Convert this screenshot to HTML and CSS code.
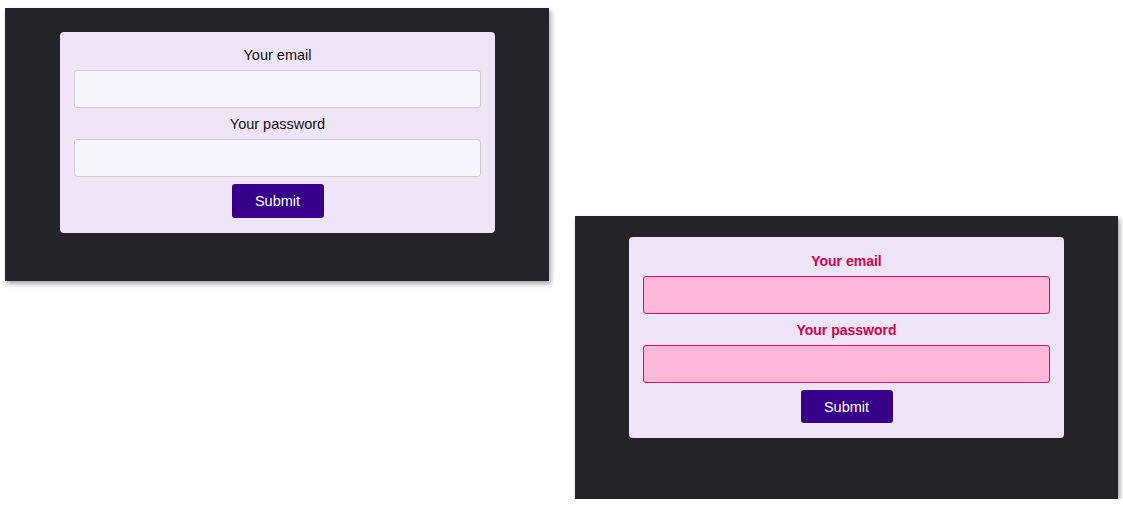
FILE: index.html
```html
<!DOCTYPE html>
<html lang="en">
<head>
<meta charset="utf-8">
<title>Forms</title>
<link rel="stylesheet" href="styles.css">
</head>
<body>
<div class="stage">
  <div class="panel panel-a">
    <form class="card">
      <label class="label">Your email</label>
      <div class="field"></div>
      <label class="label">Your password</label>
      <div class="field"></div>
      <button type="button" class="btn">Submit</button>
    </form>
  </div>
  <div class="panel panel-b">
    <form class="card error">
      <label class="label">Your email</label>
      <div class="field"></div>
      <label class="label">Your password</label>
      <div class="field"></div>
      <button type="button" class="btn">Submit</button>
    </form>
  </div>
</div>
</body>
</html>
```
FILE: styles.css
```css
html, body {
  margin: 0;
  padding: 0;
  background: #ffffff;
  font-family: "Liberation Sans", Arial, sans-serif;
}
.stage {
  display: flex;
  align-items: flex-start;
  gap: 26px;
  padding: 8px 0 0 5px;
}
.panel {
  background: #242328;
  box-shadow: 2px 3px 5px rgba(0, 0, 0, 0.35);
  box-sizing: border-box;
}
.panel-a {
  width: 544px;
  height: 273px;
  padding: 24px 54px 0 55px;
}
.panel-b {
  width: 543px;
  height: 283px;
  margin-top: 208px;
  padding: 21px 54px 0 54px;
}
.card {
  box-sizing: border-box;
  width: 435px;
  height: 201px;
  background: #efe5f8;
  border-radius: 4px;
  padding: 15px 14px 15px 14px;
  display: flex;
  flex-direction: column;
  align-items: center;
  margin: 0;
}
.label {
  font-size: 14.5px;
  line-height: 16px;
  color: #111111;
}
.field {
  box-sizing: border-box;
  width: 100%;
  height: 38px;
  margin: 7px 0 8px;
  background: #f7f5fc;
  border: 1px solid #cfcbd6;
  border-radius: 3px;
}
.btn {
  margin-top: -1px;
  width: 92px;
  height: 34px;
  border: none;
  border-radius: 3px;
  background: #36008a;
  color: #ffffff;
  font-family: "Liberation Sans", Arial, sans-serif;
  font-size: 14.5px;
  padding: 0;
}
.card.error {
  padding-top: 16px;
}
.error .label {
  color: #d6004e;
  font-weight: bold;
  font-size: 14px;
}
.error .field {
  background: #ffb7d9;
  border-color: #ee0074;
}
.error .btn {
  height: 33px;
}
```
